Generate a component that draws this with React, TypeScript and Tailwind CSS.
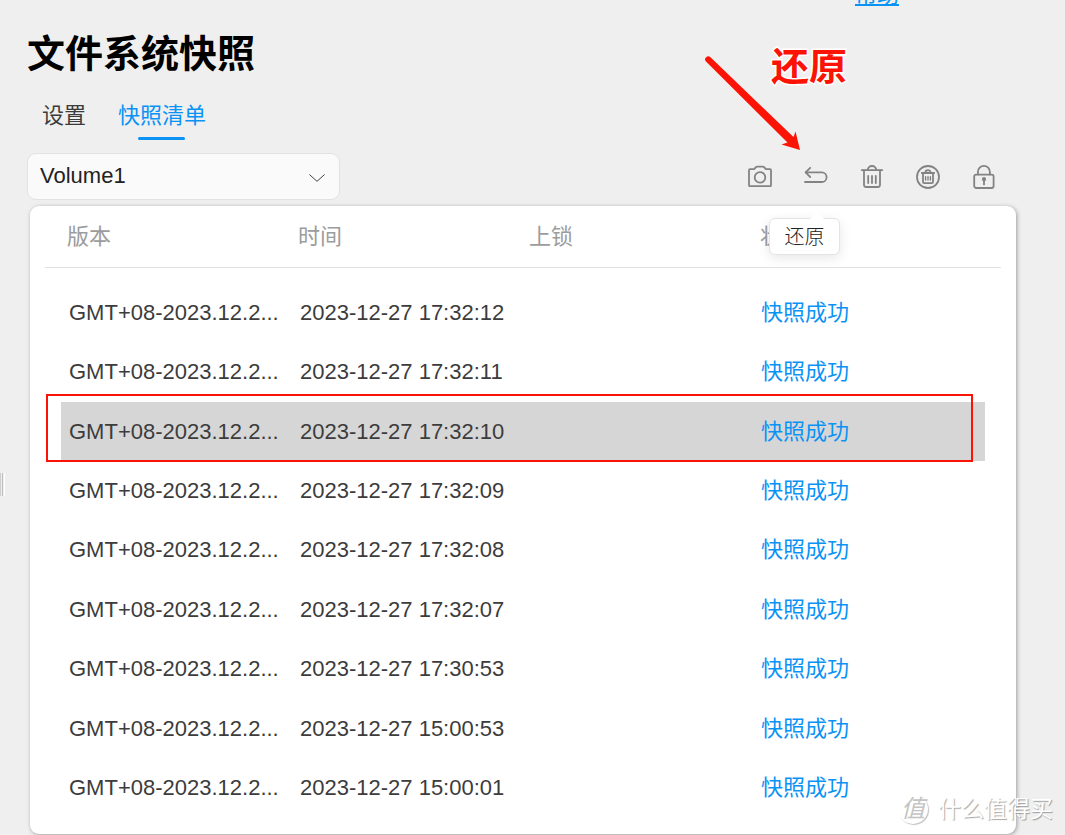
import React from "react";

const SNAPSHOTS = [
  { time: "2023-12-27 17:32:12" },
  { time: "2023-12-27 17:32:11" },
  { time: "2023-12-27 17:32:10" },
  { time: "2023-12-27 17:32:09" },
  { time: "2023-12-27 17:32:08" },
  { time: "2023-12-27 17:32:07" },
  { time: "2023-12-27 17:30:53" },
  { time: "2023-12-27 15:00:53" },
  { time: "2023-12-27 15:00:01" },
];

const Icon = ({ children }: { children: React.ReactNode }) => (
  <svg
    viewBox="0 0 24 24"
    className="block size-6"
    fill="none"
    stroke="#838383"
    strokeWidth="1.8"
    strokeLinecap="round"
    strokeLinejoin="round"
    aria-hidden="true"
  >
    {children}
  </svg>
);

const CameraIcon = () => (
  <Icon>
    <path d="M2 4.2H6.2L7.6 2.4Q8.4 1.6 9.2 1.6H14.8Q15.6 1.6 16.4 2.4L17.8 4.2H22Q23 4.2 23 5.2V20.2Q23 21.2 22 21.2H2Q1 21.2 1 20.2V5.2Q1 4.2 2 4.2Z" />
    <circle cx="12" cy="12.4" r="5.3" />
  </Icon>
);

const RestoreIcon = () => (
  <Icon>
    <path d="M6.2 2.8L1.6 7.4L6.2 12" />
    <path d="M2 7.4H17.8A4.8 4.8 0 0 1 17.8 17H1" />
  </Icon>
);

const TrashIcon = () => (
  <Icon>
    <path d="M1.8 5.2H22.2" />
    <path d="M7.8 5A4.2 4 0 0 1 16.2 5" />
    <path d="M4 5.4V19.8Q4 22 6.2 22H17.8Q20 22 20 19.8V5.4" />
    <path d="M8.2 11V18M12 11V18M15.8 11V18" />
  </Icon>
);

const TrashAllIcon = () => (
  <Icon>
    <circle cx="12" cy="12" r="11" />
    <path d="M5.8 8H18.2M9.4 7.6A2.6 2.4 0 0 1 14.6 7.6" />
    <path d="M7 8.4V17Q7 18.2 8.2 18.2H15.8Q17 18.2 17 17V8.4" />
    <path strokeWidth="1.4" d="M9.6 11.8V15M12 11.8V15M14.4 11.8V15" />
  </Icon>
);

const LockIcon = () => (
  <Icon>
    <rect x="2.2" y="9.6" width="19.4" height="13.4" rx="2" />
    <path d="M5.9 9.4V6.9A6 6 0 0 1 17.9 6.9V9.4" />
    <path d="M12 15V19.4" />
    <circle cx="12" cy="14.2" r="1.2" fill="#838383" />
  </Icon>
);

const TOOLS = [
  { label: "快照", icon: <CameraIcon /> },
  { label: "还原", icon: <RestoreIcon />, tip: true },
  { label: "删除", icon: <TrashIcon /> },
  { label: "全部删除", icon: <TrashAllIcon /> },
  { label: "上锁", icon: <LockIcon /> },
];

const Tooltip = ({ text }: { text: string }) => (
  <div
    role="tooltip"
    className="absolute top-[53px] -left-[35px] z-10 h-[37px] w-[71px] rounded-md border border-[#e4e4e4] bg-white pt-px text-center text-[20px] leading-[35px] font-light text-[#222222] shadow-[0_3px_12px_rgba(0,0,0,0.1)]"
  >
    {text}
    <svg viewBox="0 0 16 8" className="absolute -top-[7px] left-[39px] h-2 w-4" aria-hidden="true">
      <path d="M0 8L8 0L16 8Z" fill="#ffffff" />
    </svg>
  </div>
);

const App = () => {
  const [selected, setSelected] = React.useState(2);
  const [volume, setVolume] = React.useState("Volume1");

  return (
    <main className="relative flex min-h-screen w-full flex-col overflow-hidden bg-[#efefef] pr-[49px] pb-px pl-[27px] font-['Liberation_Sans','Noto_Sans_CJK_SC',sans-serif] text-[22px] leading-8 text-[#3c3c3c]">
      <div className="flex h-1.5 items-end justify-end pr-[117px]">
        <a href="#help" className="leading-[22px] text-[#0a93f5] underline">
          帮助
        </a>
      </div>

      <h1 className="mt-6 text-[38px] leading-[48px] font-bold text-black">文件系统快照</h1>

      <div role="tablist" className="mt-[22px] flex gap-8 pl-[15px]">
        <button role="tab" aria-selected="false" className="h-10 pb-2">
          设置
        </button>
        <button role="tab" aria-selected="true" className="relative h-10 pb-2 text-[#0a93f5]">
          快照清单
          <span className="absolute bottom-0 left-5 h-[3px] w-[47px] rounded-full bg-[#0a93f5]" />
        </button>
      </div>

      <div className="mt-[13px] flex items-center justify-between pr-5">
        <div className="relative w-[313px]">
          <select
            aria-label="存储卷"
            value={volume}
            onChange={(e) => setVolume(e.target.value)}
            className="block h-[47px] w-full appearance-none rounded-[9px] border border-[#e2e2e2] bg-[#fafafa] pb-0.5 pl-3 text-[#222222]"
          >
            <option>Volume1</option>
          </select>
          <svg
            viewBox="0 0 16 8"
            className="pointer-events-none absolute top-[21px] right-[15px] h-2 w-4"
            fill="none"
            stroke="#444444"
            aria-hidden="true"
          >
            <path d="M0.4 0.5L8 7.3L15.6 0.5" />
          </svg>
        </div>

        <div className="flex gap-8">
          {TOOLS.map((tool) => (
            <div key={tool.label} className="relative">
              <button aria-label={tool.label} className="block">
                {tool.icon}
              </button>
              {tool.tip && <Tooltip text={tool.label} />}
            </div>
          ))}
        </div>
      </div>

      <section className="mt-1.5 ml-[3px] flex flex-1 flex-col rounded-[9px] bg-white px-[15px] shadow-[1px_1px_4px_rgba(0,0,0,0.35)]">
        <table className="flex w-full flex-1 flex-col text-left">
          <thead className="block border-b border-[#e2e2e2] px-4 text-[#9c9c9c]">
            <tr className="grid h-[61px] grid-cols-4 items-center">
              <th className="pl-1.5 font-normal">版本</th>
              <th className="pl-1.5 font-normal">时间</th>
              <th className="pl-1.5 font-normal">上锁</th>
              <th className="pl-1.5 font-normal">状态</th>
            </tr>
          </thead>
          <tbody className="grid flex-1 auto-rows-fr px-4 pt-[15px] pb-4">
            {SNAPSHOTS.map((item, i) => (
              <tr
                key={item.time}
                onClick={() => setSelected(i)}
                className={
                  i === selected
                    ? "relative grid grid-cols-4 items-center bg-[#d6d6d6]"
                    : "grid grid-cols-4 items-center"
                }
              >
                <td className="pl-2">
                  GMT+08-2023.12.2...
                  {i === 2 && (
                    <span className="pointer-events-none absolute -top-2 right-3 -bottom-px -left-[15px] border-2 border-[#fb1405]" />
                  )}
                </td>
                <td className="pl-2">{item.time}</td>
                <td className="pl-2" />
                <td className="pl-[7px] text-[#0a93f5]">快照成功</td>
              </tr>
            ))}
          </tbody>
        </table>
      </section>

      {/* panel resize handle */}
      <div className="absolute top-[473px] left-0 flex h-[23px] gap-px">
        <span className="w-px bg-[#cfcfcf]" />
        <span className="w-px bg-[#bdbdbd]" />
        <span className="w-px bg-white" />
      </div>

      {/* annotations */}
      <div className="absolute top-[43px] right-[218px] text-[38px] leading-[48px] font-bold text-[#fb1405] [paint-order:stroke_fill] [-webkit-text-stroke:3px_white]">
        还原
      </div>
      <svg
        viewBox="0 0 96 96"
        className="pointer-events-none absolute top-[56px] right-[264px] size-24"
        aria-hidden="true"
      >
        <path
          d="M1 5.5A3 3 0 0 1 5.5 1.3L88.5 81L90.5 75.5L95 94L76.5 88.5L82.5 86.5Z"
          fill="#fb1405"
        />
      </svg>

      {/* watermark */}
      <div className="pointer-events-none absolute right-3 bottom-2.5 flex items-center gap-2.5">
        <span className="flex size-[30px] items-center justify-center rounded-full bg-white text-[24px] text-[#c4c4c4] italic shadow-[1px_1px_1px_rgba(0,0,0,0.25)]">
          值
        </span>
        <span className="text-[23px] text-white [text-shadow:1px_1px_1px_rgba(0,0,0,0.35)]">
          什么值得买
        </span>
      </div>
    </main>
  );
};

export default App;
